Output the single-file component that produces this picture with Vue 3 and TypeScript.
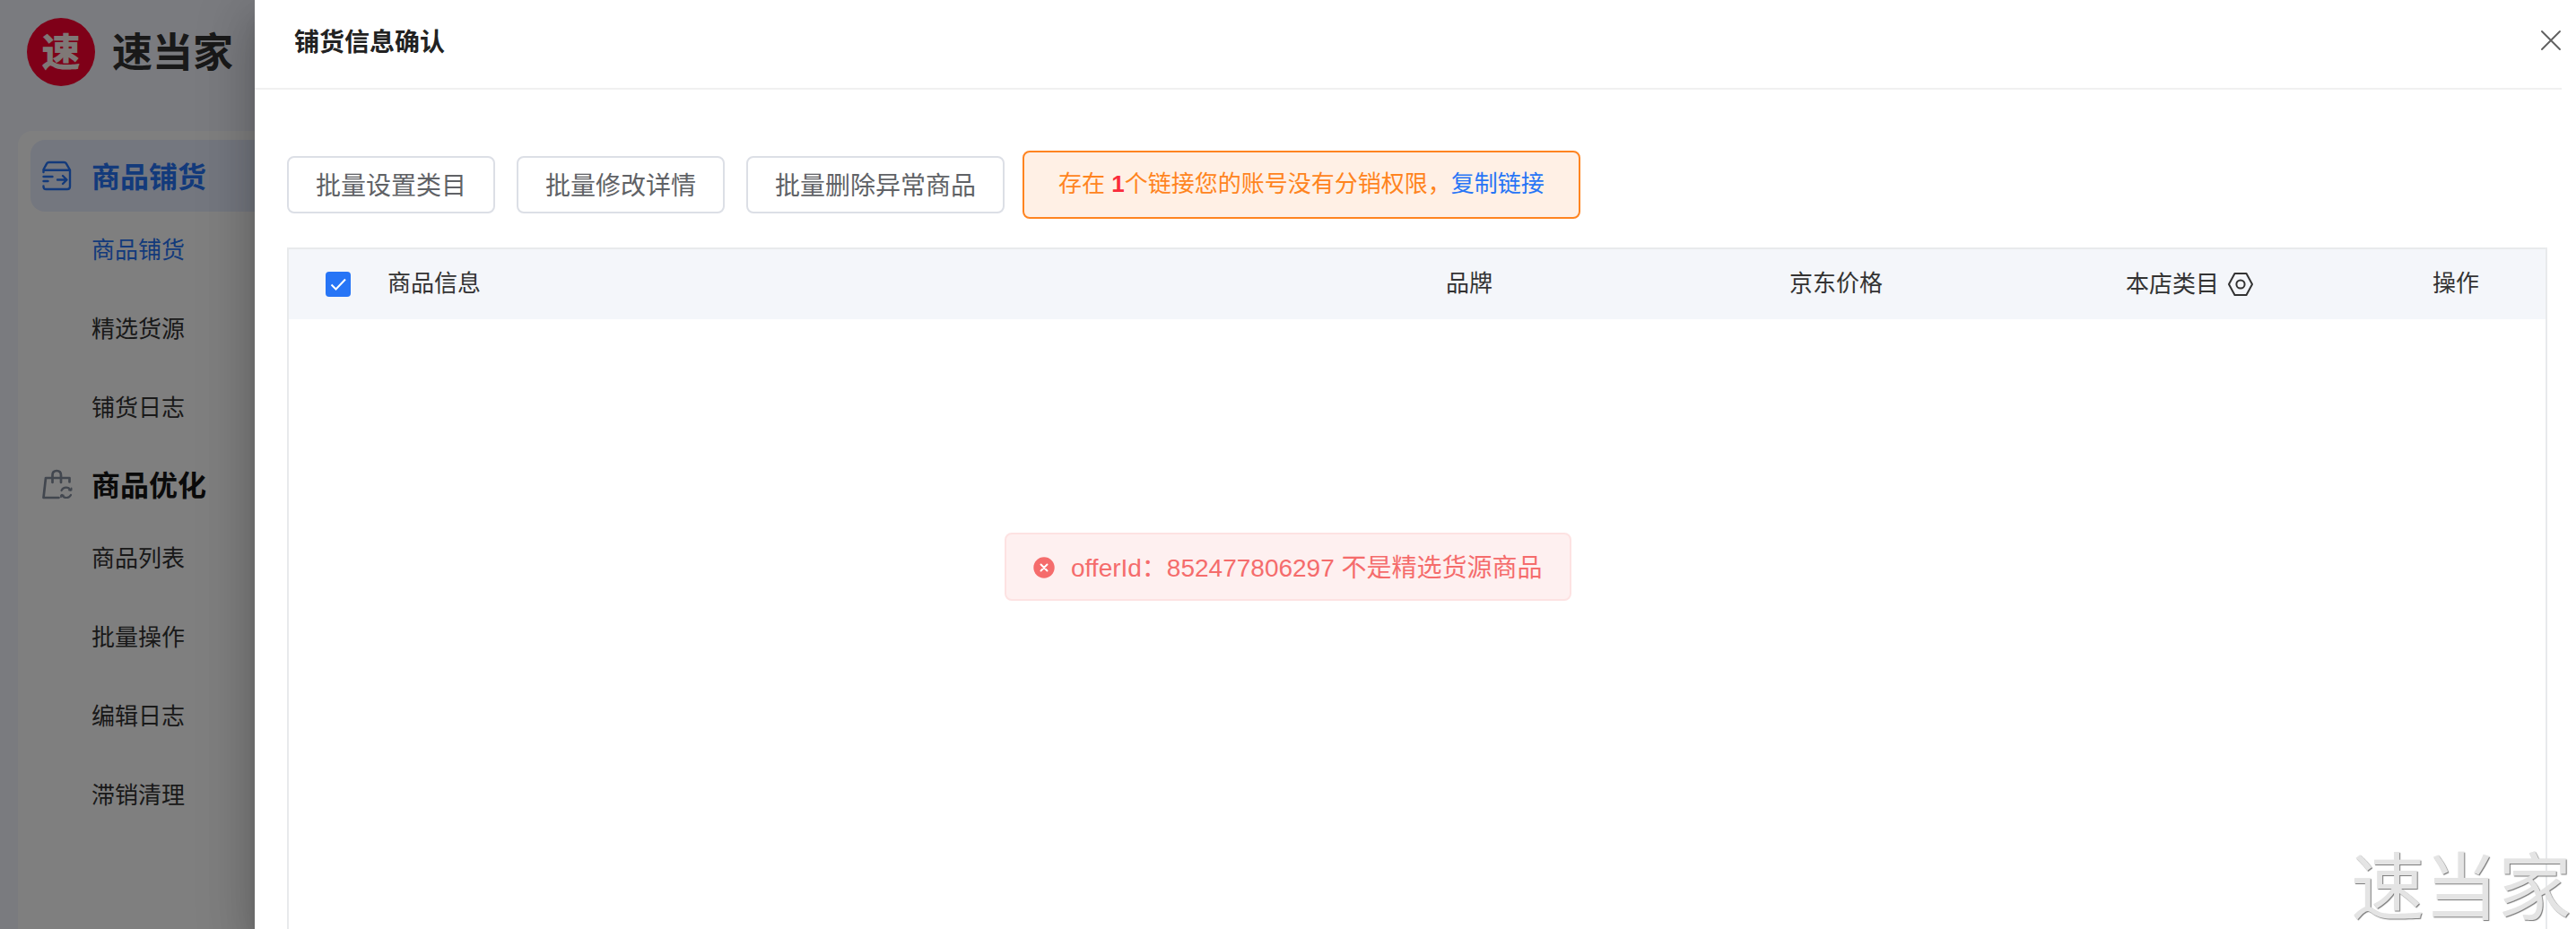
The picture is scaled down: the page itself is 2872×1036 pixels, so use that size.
<script setup lang="ts">
interface MenuGroup {
  title: string
  icon: 'box' | 'bag'
  active: boolean
  items: string[]
}

const groups: MenuGroup[] = [
  { title: '商品铺货', icon: 'box', active: true, items: ['商品铺货', '精选货源', '铺货日志'] },
  { title: '商品优化', icon: 'bag', active: false, items: ['商品列表', '批量操作', '编辑日志', '滞销清理'] },
]
const actions: string[] = ['批量设置类目', '批量修改详情', '批量删除异常商品']
</script>

<template>
  <div class="page">
    <aside class="side">
      <div class="brand">
        <span class="logo">速</span>
        <span class="brand-name">速当家</span>
      </div>
      <nav class="menu">
        <section v-for="g in groups" :key="g.title">
          <div class="group" :class="{ active: g.active }">
            <svg v-if="g.icon === 'box'" class="g-icon" viewBox="0 0 36 36" width="36" height="36" fill="none" stroke="currentColor" stroke-width="2.4" stroke-linecap="round" stroke-linejoin="round">
              <path d="M2.5 14V11L6.3 4.2Q7 3 8.5 3H25.5Q27 3 27.7 4.2L32 11.5V30Q32 33 29 33H5.5Q2.5 33 2.5 30V29.5M2.5 11.8H32M2.5 19H12.5M2.5 24H7.5M18 22.5H28M24 18L28.5 22.5L24 27" />
            </svg>
            <svg v-else class="g-icon bag" viewBox="0 0 36 36" width="36" height="36" fill="none" stroke="currentColor" stroke-width="2.7" stroke-linecap="round" stroke-linejoin="round">
              <path d="M19.5 33H2.5L5 11H31.5V15.5M12.5 16V8Q12.5 3 17.2 3Q22 3 22 8V16" />
              <path d="M22.5 25Q24 21.7 27.7 21.7Q31 21.7 32.5 24.5M33 30Q31.5 33 28 33Q24.5 33 23 30" stroke-width="2.2" />
              <path d="M31 24.5H33.6V22.5M24.8 30.3H22V32.3" stroke-width="1.8" />
            </svg>
            <span>{{ g.title }}</span>
          </div>
          <div v-for="(item, i) in g.items" :key="item" class="item" :class="{ current: g.active && i === 0 }">{{ item }}</div>
        </section>
      </nav>
    </aside>

    <div class="mask">
      <div class="drawer">
        <header class="head">
          <h1>铺货信息确认</h1>
          <svg class="close" width="24" height="24" viewBox="0 0 24 24" stroke="#606060" stroke-width="1.9" stroke-linecap="round">
            <path d="M2 2L22 22M22 2L2 22" />
          </svg>
        </header>
        <div class="toolbar">
          <button v-for="a in actions" :key="a" type="button">{{ a }}</button>
          <div class="notice">存在 <b>1</b>个链接您的账号没有分销权限，<a>复制链接</a></div>
        </div>
        <div class="table">
          <div class="thead">
            <span class="check">
              <svg width="28" height="28" viewBox="0 0 28 28" fill="none" stroke="#fff" stroke-width="2"><path d="M6.5 14.5L11.5 19.5L22 8.5" /></svg>
            </span>
            <span class="c-info">商品信息</span>
            <span class="c-brand">品牌</span>
            <span class="c-price">京东价格</span>
            <span class="c-cat">本店类目
              <svg width="28" height="28" viewBox="0 0 28 28" fill="none" stroke="#333" stroke-width="2"><path d="M7.5 2H20.5L27 14L20.5 26H7.5L1 14Z" stroke-linejoin="round" /><circle cx="14" cy="14" r="4.6" /></svg>
            </span>
            <span class="c-op">操作</span>
          </div>
        </div>
      </div>
    </div>

    <div class="toast">
      <svg width="24" height="24" viewBox="0 0 24 24"><circle cx="12" cy="12" r="11.7" fill="#f56c6c" /><path d="M8.5 8.5L15.5 15.5M15.5 8.5L8.5 15.5" stroke="#fff" stroke-width="2" stroke-linecap="round" /></svg>
      <span>offerId：852477806297 不是精选货源商品</span>
    </div>
    <div class="watermark">速当家</div>
  </div>
</template>

<style>
body {
  margin: 0;
  overflow: hidden;
}
</style>

<style scoped>
.page {
  position: relative;
  width: 2872px;
  height: 1036px;
  overflow: hidden;
  background: #f5f7ff;
  font-family: "Liberation Sans", "Noto Sans CJK SC", sans-serif;
  box-sizing: border-box;
}
.page * {
  box-sizing: border-box;
}
.side {
  width: 420px;
  height: 100%;
  display: flex;
  flex-direction: column;
}
.brand {
  display: flex;
  align-items: center;
  height: 146px;
  padding: 0 0 30px 30px;
  gap: 19px;
}
.logo {
  width: 76px;
  height: 76px;
  border-radius: 50%;
  background: #fe0030;
  color: #fff0ec;
  font-size: 43px;
  font-weight: 900;
  line-height: 78px;
  text-align: center;
}
.brand-name {
  padding-top: 4px;
  font-size: 45px;
  font-weight: 700;
  line-height: 76px;
  color: #333;
}
.menu {
  flex: 1;
  margin-left: 20px;
  padding: 10px 14px;
  border-radius: 16px 16px 0 0;
  background: #fff;
}
.group {
  display: flex;
  align-items: center;
  height: 84px;
  padding-left: 12px;
  gap: 20px;
  border-radius: 16px;
  font-size: 32px;
  font-weight: 700;
  color: #151515;
  margin-bottom: -4px;
}
.group.active {
  height: 80px;
  margin-bottom: -2px;
  background: #e9efff;
  color: #2775f6;
}
.group span {
  padding-bottom: 2px;
}
.g-icon {
  flex: none;
}
.bag {
  color: #858e9f;
}
.item {
  height: 88px;
  padding-left: 68px;
  font-size: 26px;
  line-height: 90px;
  color: #333;
}
.item.current {
  color: #2775f6;
}
.mask {
  position: absolute;
  inset: 0;
  display: flex;
  justify-content: flex-end;
  background: rgba(0, 0, 0, 0.5);
}
.drawer {
  width: 2588px;
  height: 100%;
  display: flex;
  flex-direction: column;
  background: #fff;
  box-shadow: 0 16px 20px -10px rgba(0, 0, 0, 0.2), 0 32px 48px 4px rgba(0, 0, 0, 0.14), 0 12px 60px 10px rgba(0, 0, 0, 0.12);
}
.head {
  display: flex;
  justify-content: space-between;
  height: 100px;
  margin-right: 16px;
  padding-left: 44px;
  border-bottom: 2px solid #f0f0f0;
}
.head h1 {
  margin: 0;
  font-size: 28px;
  font-weight: 700;
  line-height: 95px;
  color: #222;
}
.close {
  margin-top: 33px;
}
.toolbar {
  display: flex;
  align-items: center;
  height: 76px;
  margin: 68px 0 32px 36px;
}
button {
  height: 64px;
  margin: 0 24px 0 0;
  padding: 0 30px 2px;
  border: 2px solid #dcdfe6;
  border-radius: 8px;
  background: #fff;
  color: #606266;
  font: 28px "Liberation Sans", "Noto Sans CJK SC", sans-serif;
}
.notice {
  width: 622px;
  height: 76px;
  margin-left: -4px;
  padding-left: 38px;
  border: 2px solid #ff8420;
  border-radius: 8px;
  background: #fff0e5;
  color: #ff8420;
  font-size: 26px;
  line-height: 70px;
  white-space: nowrap;
}
.notice b {
  color: #fa2c3c;
}
.notice a {
  color: #2775f6;
}
.table {
  flex: 1;
  width: 2520px;
  margin-left: 36px;
  border: 2px solid #e8eaec;
  border-bottom: 0;
}
.thead {
  display: flex;
  align-items: center;
  height: 78px;
  background: #f4f6fa;
  color: #333;
  font-size: 26px;
}
.thead > span {
  flex: none;
  line-height: 77px;
  height: 78px;
}
.thead .check {
  width: 28px;
  height: 28px;
  margin-left: 41px;
  border-radius: 4px;
  background: #2775f6;
  line-height: 0;
}
.c-info {
  margin-left: 41px;
  width: 1086px;
}
.c-brand {
  width: 240px;
  text-align: center;
}
.c-price {
  width: 576px;
  padding-left: 237px;
}
.c-cat {
  display: flex;
  align-items: center;
  width: 342px;
  margin-left: 36px;
  gap: 10px;
}
.c-op {
  width: 100px;
}
.toast {
  position: absolute;
  left: 1120px;
  top: 594px;
  display: flex;
  align-items: center;
  width: 632px;
  height: 76px;
  padding-left: 30px;
  gap: 18px;
  border: 2px solid #fde2e2;
  border-radius: 8px;
  background: #fef0f0;
  color: #f56c6c;
  font-size: 28px;
  white-space: nowrap;
}
.toast svg {
  margin-top: 2px;
}
.toast span {
  padding-bottom: 3px;
}
.watermark {
  position: absolute;
  left: 2621px;
  top: 932px;
  font-size: 82px;
  line-height: 118px;
  color: #e4e4e4;
  text-shadow: 1px 1px 1px #777;
}
</style>
